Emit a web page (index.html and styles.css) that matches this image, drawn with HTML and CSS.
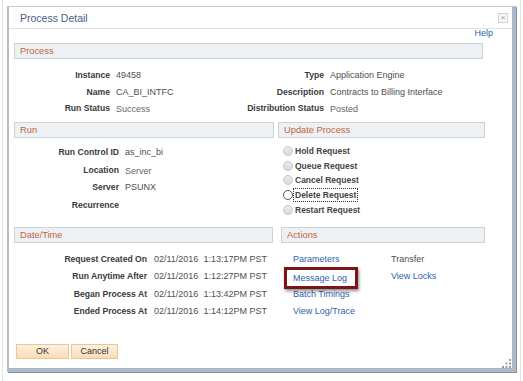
FILE: index.html
```html
<!DOCTYPE html>
<html lang="en">
<head>
    <meta charset="UTF-8">
    <title>Process Detail</title>
    <link rel="stylesheet" href="styles.css">
</head>
<body>

    <div class="screen">
        <div class="dialog">
            <div class="titlebar">
                <span class="title">Process Detail</span>
                <span class="close">&times;</span>
            </div>

            <div class="content">
                <div class="help-row"><a class="link" href="#">Help</a></div>

                <div class="section section-process">
                    <div class="bar">Process</div>
                    <div class="fields process-fields">
                        <span class="lbl">Instance</span><span class="val">49458</span>
                        <span class="lbl">Type</span><span class="val">Application Engine</span>
                        <span class="lbl">Name</span><span class="val">CA_BI_INTFC</span>
                        <span class="lbl">Description</span><span class="val">Contracts to Billing Interface</span>
                        <span class="lbl">Run Status</span><span class="val val-low">Success</span>
                        <span class="lbl">Distribution Status</span><span class="val val-low">Posted</span>
                    </div>
                </div>

                <div class="pair pair-run">
                    <div class="section">
                        <div class="bar">Run</div>
                        <div class="fields run-fields">
                            <span class="lbl">Run Control ID</span><span class="val">as_inc_bi</span>
                            <span class="lbl">Location</span><span class="val val-low">Server</span>
                            <span class="lbl">Server</span><span class="val">PSUNX</span>
                            <span class="lbl">Recurrence</span><span class="val"></span>
                        </div>
                    </div>
                    <div class="section">
                        <div class="bar">Update Process</div>
                        <div class="radios">
                            <div class="radio-row"><span class="radio"></span>Hold Request</div>
                            <div class="radio-row"><span class="radio"></span>Queue Request</div>
                            <div class="radio-row"><span class="radio"></span>Cancel Request</div>
                            <div class="radio-row"><span class="radio radio-on"></span><span class="focus">Delete Request</span></div>
                            <div class="radio-row"><span class="radio"></span>Restart Request</div>
                        </div>
                    </div>
                </div>

                <div class="pair pair-date">
                    <div class="section">
                        <div class="bar">Date/Time</div>
                        <div class="fields date-fields">
                            <span class="lbl">Request Created On</span><span class="val">02/11/2016<span class="time">1:13:17PM PST</span></span>
                            <span class="lbl">Run Anytime After</span><span class="val">02/11/2016<span class="time">1:12:27PM PST</span></span>
                            <span class="lbl">Began Process At</span><span class="val">02/11/2016<span class="time">1:13:42PM PST</span></span>
                            <span class="lbl">Ended Process At</span><span class="val">02/11/2016<span class="time">1:14:12PM PST</span></span>
                        </div>
                    </div>
                    <div class="section">
                        <div class="bar">Actions</div>
                        <div class="actions">
                            <a class="link" href="#">Parameters</a><span class="val">Transfer</span>
                            <span><a class="link callout" href="#">Message Log<span class="callout-box"></span></a></span><a class="link" href="#">View Locks</a>
                            <a class="link" href="#">Batch Timings</a><span></span>
                            <a class="link" href="#">View Log/Trace</a><span></span>
                        </div>
                    </div>
                </div>

                <div class="buttons">
                    <button class="btn btn-ok">OK</button>
                    <button class="btn btn-cancel">Cancel</button>
                </div>
            </div>

            <span class="grip">
                <svg width="9" height="9" viewBox="0 0 9 9">
                    <rect x="7" y="0" width="2" height="2" fill="#9a9a9a"/>
                    <rect x="3.5" y="3.5" width="2" height="2" fill="#9a9a9a"/>
                    <rect x="7" y="3.5" width="2" height="2" fill="#9a9a9a"/>
                    <rect x="0" y="7" width="2" height="2" fill="#9a9a9a"/>
                    <rect x="3.5" y="7" width="2" height="2" fill="#9a9a9a"/>
                    <rect x="7" y="7" width="2" height="2" fill="#9a9a9a"/>
                </svg>
            </span>
        </div>
    </div>

</body>
</html>
```

FILE: styles.css
```css
body {
    margin: 0;
    background: #fff;
    font-family: Arial, "Liberation Sans", sans-serif;
}
.screen {
    box-sizing: border-box;
    width: 519px;
    height: 381px;
    margin-left: 2px;
    padding: 6px 0 0 4px;
    border-left: 1px solid #e3e3e3;
    border-right: 1px solid #e3e3e3;
}
.dialog {
    position: relative;
    width: 503px;
    height: 361px;
    background: #fff;
    border-top: 1px solid #cacaca;
    border-left: 2px solid #bdbdbd;
    border-right: 4px solid #a9b9c9;
    border-bottom: 4px solid #a9b9c9;
    box-shadow: 1px 1px 0 #8f8f8f;
}
.titlebar {
    height: 21px;
    display: flex;
    align-items: center;
    justify-content: space-between;
    padding: 0 4px 0 11px;
    border-bottom: 1px solid #dfe3e8;
}
.title {
    font-size: 10.5px;
    color: #4a5d85;
}
.close {
    width: 8px;
    height: 8px;
    border: 1px solid #d2d2d2;
    background: #f6f6f6;
    color: #9a9a9a;
    font-size: 8px;
    line-height: 8px;
    text-align: center;
}
.content {
    padding-left: 5px;
}
.help-row {
    height: 14px;
    line-height: 9px;
    display: flex;
    justify-content: flex-end;
    padding-right: 19px;
    font-size: 9px;
}
.link {
    color: #2f5fad;
    text-decoration: none;
    font-size: 9px;
}
.bar {
    height: 14px;
    line-height: 14px;
    padding-left: 5px;
    border: 1px solid #cbd3da;
    background: #eef1f4;
    color: #c0643c;
    font-size: 9.3px;
}
.section-process {
    width: 469px;
}
.fields {
    display: grid;
    align-items: center;
}
.lbl {
    text-align: right;
    font-weight: bold;
    font-size: 8.6px;
    color: #3a3a3a;
}
.val {
    font-size: 9px;
    color: #4f4f4f;
}
.val-low {
    padding-top: 2px;
    color: #666;
}
.process-fields {
    grid-template-columns: 96px 108px 94px 1fr;
    column-gap: 6px;
    grid-auto-rows: 16.5px;
    margin: 8px 0 5.5px;
}
.pair {
    display: grid;
    align-items: start;
}
.pair-run {
    grid-template-columns: 260px 207px;
    column-gap: 4px;
    height: 95px;
}
.pair-date {
    grid-template-columns: 259px 204px;
    column-gap: 8px;
    margin-top: 10px;
}
.run-fields {
    grid-template-columns: 105px 1fr;
    column-gap: 6px;
    grid-auto-rows: 17.5px;
    margin-top: 5.5px;
}
.radios {
    margin-top: 6px;
    padding-left: 5px;
}
.radio-row {
    height: 14.6px;
    display: flex;
    align-items: center;
    gap: 2px;
    font-weight: bold;
    font-size: 8.5px;
    color: #444;
}
.radio {
    box-sizing: border-box;
    width: 10px;
    height: 10px;
    border-radius: 50%;
    border: 1px solid #c6c6c6;
    background: linear-gradient(#ececec, #d9d9d9);
}
.radio-on {
    border-color: #5a5a5a;
    background: #fff;
}
.focus {
    outline: 1px dotted #333;
    outline-offset: 1px;
}
.date-fields {
    grid-template-columns: 133px 1fr;
    column-gap: 7px;
    grid-auto-rows: 17.3px;
    margin-top: 7.3px;
}
.time {
    margin-left: 5px;
}
.actions {
    display: grid;
    grid-template-columns: 98px 1fr;
    grid-auto-rows: 17.3px;
    align-items: center;
    padding-left: 12px;
    margin-top: 7.3px;
}
.callout {
    position: relative;
    display: inline-block;
    line-height: 10px;
}
.callout-box {
    position: absolute;
    left: -9px;
    right: -11px;
    top: -6px;
    bottom: -6px;
    border: 3.5px solid #7b1519;
    box-shadow: 1px 2px 3px rgba(0, 0, 0, 0.45);
}
.buttons {
    display: flex;
    gap: 2px;
    padding-left: 2px;
    margin-top: 24.5px;
}
.btn {
    height: 15px;
    padding: 0;
    border: 1px solid #edc49b;
    background: linear-gradient(#fdf1de, #f9dcb6);
    font-family: Arial, "Liberation Sans", sans-serif;
    font-size: 9px;
    color: #333;
}
.btn-ok {
    width: 53px;
}
.btn-cancel {
    width: 47px;
}
.grip {
    position: absolute;
    right: 1px;
    bottom: 0;
    line-height: 0;
}
```
